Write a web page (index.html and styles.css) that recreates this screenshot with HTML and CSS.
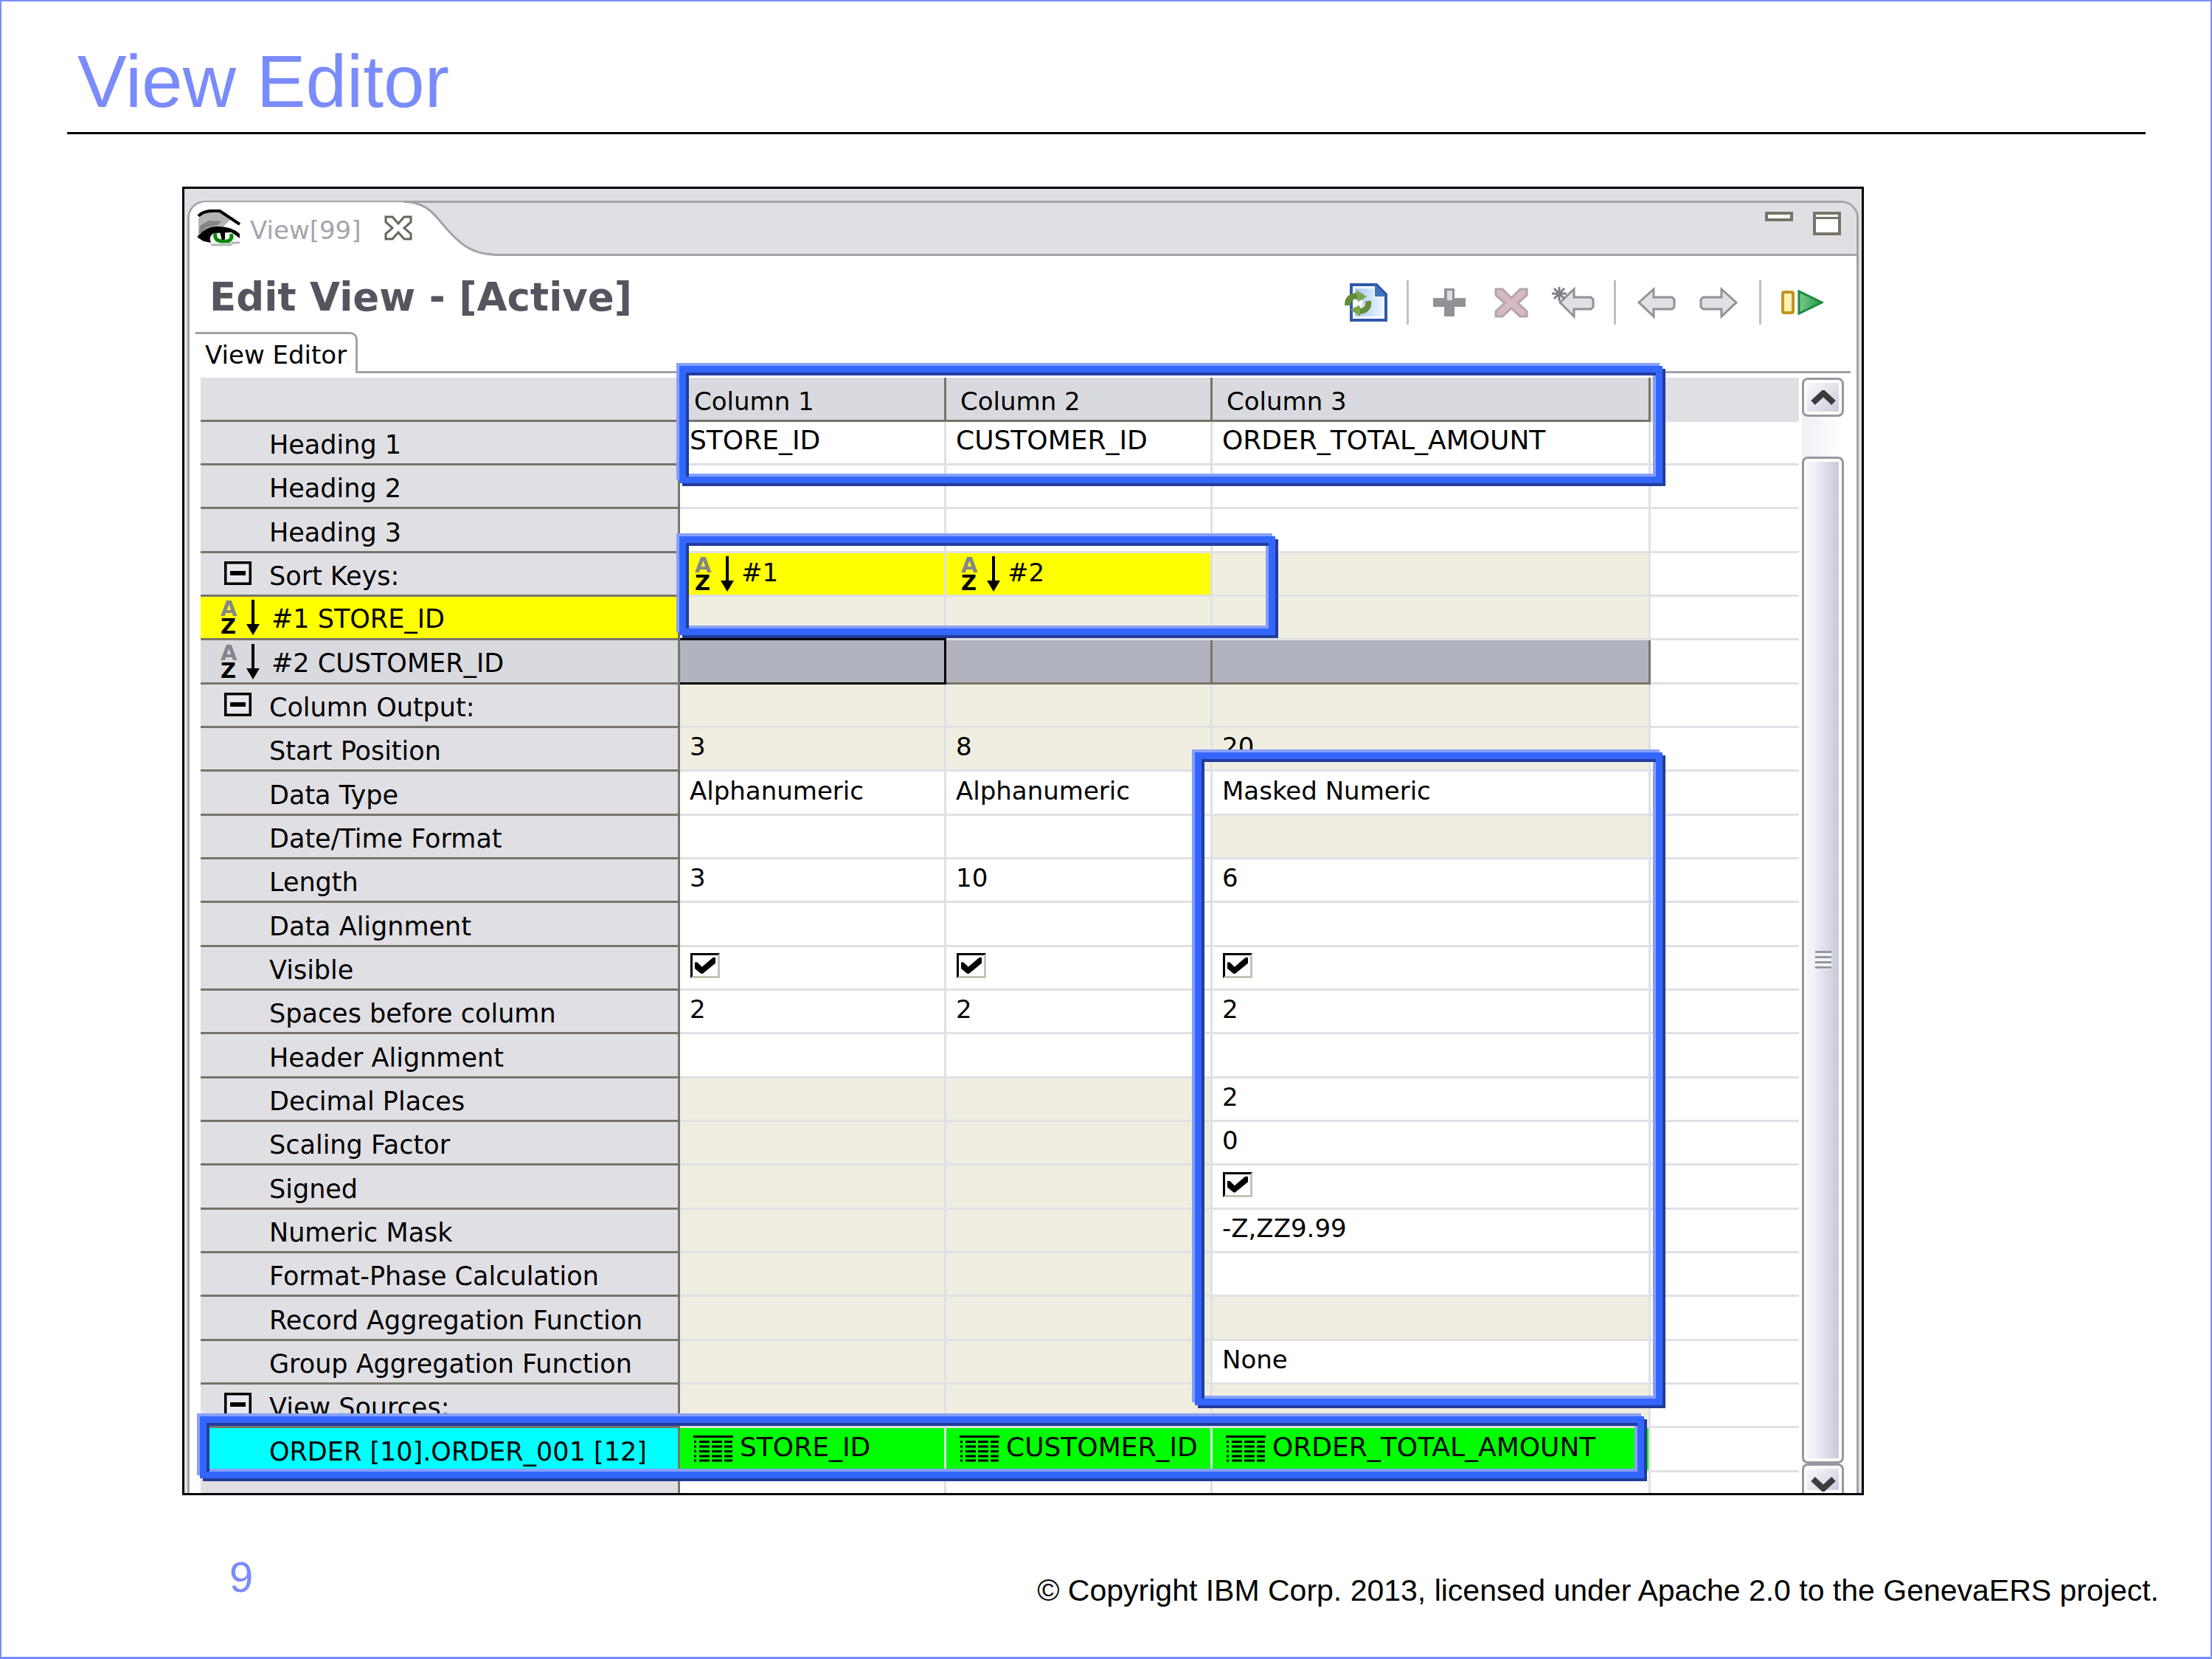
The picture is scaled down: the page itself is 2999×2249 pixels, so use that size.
FILE: index.html
```html
<!DOCTYPE html>
<html lang="en">
<head>
<meta charset="utf-8">
<title>View Editor</title>
<link rel="stylesheet" href="styles.css">
</head>
<body>
<svg class="defs" aria-hidden="true">
  <symbol id="down" viewBox="0 0 18 48">
    <path d="M9 0v36" stroke="#000" stroke-width="4"/>
    <path d="M0 33h18l-9 15z" fill="#000"/>
  </symbol>
  <symbol id="minus" viewBox="0 0 37 32">
    <rect x="1.5" y="1.5" width="34" height="29" fill="#e8e8ee" stroke="#000" stroke-width="4"/>
    <path d="M8 16h21" stroke="#000" stroke-width="6"/>
  </symbol>
  <symbol id="field" viewBox="0 0 54 36">
    <path d="M0 1.5h54" stroke="#000" stroke-width="3"/>
    <path d="M1 8.500h52M1 15h52M1 21.500h52M1 28h52M1 34h52" stroke="#000" stroke-width="3" stroke-dasharray="3 4 14 3 14 3 13"/>
  </symbol>
</svg>
<div class="slide">
  <header class="slide-head"><h1>View Editor</h1></header>
  <main class="shot">
    <div class="folder">
      <div class="strip">
        <svg class="tab-shape" viewBox="0 0 412 75" aria-hidden="true">
          <path d="M0 75V20Q4 5 20 2H290C330 2 335 28 362 52Q382 72 412 73V75z" fill="#fff"/>
          <path d="M290 1.500C330 2 335 28 362 52Q382 72 412 73" fill="none" stroke="#a3a2a9" stroke-width="3"/>
        </svg>
        <div class="tab">
          <svg class="eye" viewBox="0 0 58 50" aria-hidden="true">
            <path d="M1 12Q10 1 30 3L44 14 34 24Q16 22 1 34z" fill="#b5b5b5"/>
            <path d="M3 22l12-7 18 1-6 5-14 3-11 9z" fill="#858585"/>
            <path d="M1 9Q8 0 30 2L57 20" fill="none" stroke="#000" stroke-width="4"/>
            <path d="M0 36Q12 22 28 23 46 23 57 33V39L46 31 22 32Q14 36 18 45L8 43 0 38z" fill="#000"/>
            <path d="M20 35Q32 30 48 33L55 39 44 44H24z" fill="#fff"/>
            <path d="M24 32Q22 42 32 43H42Q48 39 45 33" fill="none" stroke="#078a0e" stroke-width="5"/>
            <path d="M30 30h7v10l-4 2z" fill="#000"/>
            <path d="M18 48h26l4-3h9" fill="none" stroke="#b5b5b5" stroke-width="3"/>
          </svg>
          <span class="tab-name">View[99]</span>
          <button class="plain close" aria-label="Close">
            <svg viewBox="0 0 38 34"><path d="M2 2h9l8 9 8-9h9v7l-9 8 9 8v7h-9l-8-9-8 9H2v-7l9-8-9-8z" fill="#fff" stroke="#66645a" stroke-width="3"/></svg>
          </button>
        </div>
        <div class="window-buttons">
          <button class="plain min" aria-label="Minimize"></button>
          <button class="plain max" aria-label="Maximize"></button>
        </div>
      </div>
      <div class="form-head">
        <h2>Edit View - [Active]</h2>
        <div class="toolbar">
          <button class="plain" aria-label="Refresh"><svg viewBox="0 0 58 52">
            <defs><linearGradient id="pg"><stop offset="0" stop-color="#a9cbf4"/><stop offset="1" stop-color="#eaf5ff"/></linearGradient></defs>
            <path d="M9 2h34l13 13v35H9z" fill="#fff" stroke="#3157ab" stroke-width="4"/>
            <path d="M14 7h26v12h12v26H14z" fill="url(#pg)"/><path d="M41 1v17h16z" fill="#4272ba"/>
            <path d="M4 30Q4 17 18 17M32 24Q34 37 20 38" fill="none" stroke="#638d36" stroke-width="8"/>
            <path d="M16 9l14 9-12 8zM21 45L8 36l13-8z" fill="#7ba64a"/><path d="M15 32v-7l7 5v-7" fill="none" stroke="#fff" stroke-width="4"/>
          </svg></button>
          <span class="sep"></span>
          <button class="plain" aria-label="Add" disabled><svg viewBox="0 0 58 52"><path d="M22 7h14v13h15v12H36v13H22V32H7V20h15z" fill="#929197"/><path d="M26 10h7v13h-7z" fill="#dedde2"/></svg></button>
          <button class="plain" aria-label="Delete" disabled><svg viewBox="0 0 58 52"><path d="M8 8h9l12 12L41 8h9v8L38 27l12 11v7h-9L29 34 17 45H8v-7l12-11L8 16z" fill="#d5babf" stroke="#b3a5aa" stroke-width="3"/></svg></button>
          <button class="plain" aria-label="Insert before" disabled><svg viewBox="0 0 58 52"><path d="M11 26L30 8v11h23l3 3v10l-3 3H30v10z" fill="#e1e0e5" stroke="#929197" stroke-width="3"/><path d="M0 14h20M10 5v19M3 7l14 14M17 7L3 21" stroke="#807f85" stroke-width="3"/></svg></button>
          <span class="sep"></span>
          <button class="plain" aria-label="Move left" disabled><svg viewBox="0 0 58 52"><path d="M5 26L25 8v11h25l3 3v10l-3 3H25v10z" fill="#e1e0e5" stroke="#929197" stroke-width="3"/></svg></button>
          <button class="plain" aria-label="Move right" disabled><svg viewBox="0 0 58 52"><path d="M53 26L33 8v11H8l-3 3v10l3 3h25v10z" fill="#e1e0e5" stroke="#929197" stroke-width="3"/></svg></button>
          <span class="sep"></span>
          <button class="plain" aria-label="Run"><svg viewBox="0 0 58 52">
            <defs><linearGradient id="run"><stop offset="0" stop-color="#7cc98b"/><stop offset="1" stop-color="#1f9a48"/></linearGradient></defs>
            <rect x="3" y="12" width="14" height="28" rx="2" fill="#fdf2b4" stroke="#c49320" stroke-width="4"/><path d="M25 11v30l31-15z" fill="url(#run)" stroke="#1d8a42" stroke-width="3"/>
          </svg></button>
        </div>
      </div>
      <div class="inner-tabs"><button class="plain inner-tab">View Editor</button><div class="inner-line"></div></div>
      <div class="editor">
        <div class="grid-wrap">
          <table>
            <colgroup><col class="c-label"><col class="c-std"><col class="c-std"><col class="c-wide"><col></colgroup>
            <thead>
              <tr><th class="row-label"></th><th class="col">Column 1</th><th class="col">Column 2</th><th class="col">Column 3</th><td class="rest"></td></tr>
            </thead>
            <tbody>
              <tr><th>Heading 1</th><td class="id">STORE_ID</td><td class="id">CUSTOMER_ID</td><td class="id">ORDER_TOTAL_AMOUNT</td><td></td></tr>
              <tr><th>Heading 2</th><td></td><td></td><td></td><td></td></tr>
              <tr><th>Heading 3</th><td></td><td></td><td></td><td></td></tr>
              <tr><th class="group"><button class="plain" aria-label="Collapse"><svg class="i-minus"><use href="#minus"/></svg></button>Sort Keys:</th><td class="key"><span class="i-sort"><span class="az"><b class="a">A</b><b>Z</b></span><svg><use href="#down"/></svg></span>#1</td><td class="key"><span class="i-sort"><span class="az"><b class="a">A</b><b>Z</b></span><svg><use href="#down"/></svg></span>#2</td><td class="off"></td><td></td></tr>
              <tr><th class="sorted key"><span class="i-sort"><span class="az"><b class="a">A</b><b>Z</b></span><svg><use href="#down"/></svg></span>#1 STORE_ID</th><td class="off"></td><td class="off"></td><td class="off"></td><td></td></tr>
              <tr><th class="sorted current"><span class="i-sort"><span class="az"><b class="a">A</b><b>Z</b></span><svg><use href="#down"/></svg></span>#2 CUSTOMER_ID</th><td class="sel focus"></td><td class="sel"></td><td class="sel"></td><td></td></tr>
              <tr><th class="group"><button class="plain" aria-label="Collapse"><svg class="i-minus"><use href="#minus"/></svg></button>Column Output:</th><td class="off"></td><td class="off"></td><td class="off"></td><td></td></tr>
              <tr><th>Start Position</th><td class="off">3</td><td class="off">8</td><td class="off">20</td><td></td></tr>
              <tr><th>Data Type</th><td>Alphanumeric</td><td>Alphanumeric</td><td>Masked Numeric</td><td></td></tr>
              <tr><th>Date/Time Format</th><td></td><td></td><td class="off"></td><td></td></tr>
              <tr><th>Length</th><td>3</td><td>10</td><td>6</td><td></td></tr>
              <tr><th>Data Alignment</th><td></td><td></td><td></td><td></td></tr>
              <tr><th>Visible</th><td><input type="checkbox" aria-label="Column 1 visible" checked></td><td><input type="checkbox" aria-label="Column 2 visible" checked></td><td><input type="checkbox" aria-label="Column 3 visible" checked></td><td></td></tr>
              <tr><th>Spaces before column</th><td>2</td><td>2</td><td>2</td><td></td></tr>
              <tr><th>Header Alignment</th><td></td><td></td><td></td><td></td></tr>
              <tr><th>Decimal Places</th><td class="off"></td><td class="off"></td><td>2</td><td></td></tr>
              <tr><th>Scaling Factor</th><td class="off"></td><td class="off"></td><td>0</td><td></td></tr>
              <tr><th>Signed</th><td class="off"></td><td class="off"></td><td><input type="checkbox" aria-label="Column 3 signed" checked></td><td></td></tr>
              <tr><th>Numeric Mask</th><td class="off"></td><td class="off"></td><td>-Z,ZZ9.99</td><td></td></tr>
              <tr><th>Format-Phase Calculation</th><td class="off"></td><td class="off"></td><td></td><td></td></tr>
              <tr><th>Record Aggregation Function</th><td class="off"></td><td class="off"></td><td class="off"></td><td></td></tr>
              <tr><th>Group Aggregation Function</th><td class="off"></td><td class="off"></td><td>None</td><td></td></tr>
              <tr><th class="group"><button class="plain" aria-label="Collapse"><svg class="i-minus"><use href="#minus"/></svg></button>View Sources:</th><td class="off"></td><td class="off"></td><td class="off"></td><td></td></tr>
              <tr><th class="source">ORDER [10].ORDER_001 [12]</th><td class="field id"><svg class="i-field"><use href="#field"/></svg>STORE_ID</td><td class="field id"><svg class="i-field"><use href="#field"/></svg>CUSTOMER_ID</td><td class="field id"><svg class="i-field"><use href="#field"/></svg>ORDER_TOTAL_AMOUNT</td><td></td></tr>
              <tr class="cut"><th></th><td></td><td></td><td></td><td></td></tr>
            </tbody>
          </table>
          <div class="mark mark-headings"></div>
          <div class="mark mark-keys"></div>
          <div class="mark mark-numeric"></div>
          <div class="mark mark-source"></div>
        </div>
        <div class="scrollbar">
          <button class="plain arrow" aria-label="Scroll up"><svg viewBox="0 0 34 20"><path d="M3 17L17 4l14 13" fill="none" stroke="#3c3c3c" stroke-width="8"/></svg></button>
          <div class="thumb"><span class="grip"></span></div>
          <button class="plain arrow down" aria-label="Scroll down"><svg viewBox="0 0 34 20"><path d="M3 3l14 13L31 3" fill="none" stroke="#3c3c3c" stroke-width="8"/></svg></button>
        </div>
      </div>
    </div>
  </main>
  <footer class="slide-foot"><span class="page-no">9</span><span class="copyright">© Copyright IBM Corp. 2013, licensed under Apache 2.0 to the GenevaERS project.</span></footer>
</div>
</body>
</html>
```
FILE: styles.css
```css
* { box-sizing: border-box; }

body {
  margin: 0;
  background: #fff;
  color: #000;
  font: 34px/40px "DejaVu Sans", Verdana, sans-serif;
}

h1, h2 { margin: 0; font-weight: normal; }
svg { display: block; }
.defs { position: absolute; width: 0; height: 0; }

.plain {
  margin: 0;
  padding: 0;
  border: 0;
  background: none;
  color: inherit;
  font: inherit;
}

/* Slide */
.slide {
  min-height: 100vh;
  border: 2px solid #7a8cfb;
  border-bottom-width: 3px;
  display: flex;
  flex-direction: column;
}
.slide-head {
  margin: 0 88px 0 89px;
  padding: 50px 0 11px 14px;
  border-bottom: 3px solid #000;
}
.slide-head h1 {
  color: #7a8cfb;
  font: 100px/116px "Liberation Sans", Arial, sans-serif;
}
.slide-foot {
  display: flex;
  justify-content: space-between;
  align-items: flex-start;
  padding: 78px 70px 0 309px;
  font-family: "Liberation Sans", Arial, sans-serif;
}
.page-no { color: #7a8cfb; font-size: 58px; line-height: 66px; }
.copyright { padding-top: 26px; font-size: 41px; line-height: 50px; white-space: nowrap; }

/* Framed window */
.shot {
  margin: 71px 470px 0 245px;
  border: 3px solid #000;
  background: #e0dfe4;
  padding: 16px 4px 0;
}
.folder {
  border: 3px solid #a3a2a9;
  border-bottom: 0;
  border-radius: 24px 24px 0 0;
  background: #fff;
}
.strip {
  position: relative;
  display: flex;
  justify-content: space-between;
  align-items: flex-start;
  height: 72px;
  background: #e0dfe4;
  border-bottom: 3px solid #a3a2a9;
  border-radius: 20px 20px 0 0;
}
.tab-shape { position: absolute; left: 0; top: -3px; width: 412px; height: 75px; }
.tab {
  position: relative;
  display: flex;
  align-items: center;
  padding: 9px 0 0 11px;
  color: #a6a4ad;
}
.tab-name { padding-top: 6px; }
.eye { width: 58px; height: 50px; margin-right: 13px; }
.close { margin-left: 32px; }
.close svg { width: 38px; height: 34px; }
.window-buttons { display: flex; gap: 27px; padding: 12px 21px 0 0; }
.min, .max { width: 38px; border: 4px solid #77756a; background: #fff; }
.min { height: 13px; }
.max { height: 32px; background: linear-gradient(#fff 3px, #77756a 3px 6px, #fff 6px); }

.form-head {
  display: flex;
  justify-content: space-between;
  height: 103px;
  padding: 26px 45px 0 27px;
}
h2 { color: #56555f; font-size: 53px; font-weight: bold; line-height: 60px; white-space: nowrap; }
.toolbar { display: flex; align-items: center; gap: 26px; height: 73px; }
.toolbar svg { width: 58px; height: 52px; }
.sep { width: 3px; height: 60px; background: #c0bfc7; }

.inner-tabs { display: flex; margin: 0 8px; }
.inner-tab {
  width: 220px;
  height: 56px;
  padding: 2px 0 0 13px;
  text-align: left;
  border: solid #a3a2a9;
  border-width: 3px 3px 0 0;
  border-radius: 0 10px 0 0;
}
.inner-line { flex: 1; border-bottom: 3px solid #a3a2a9; }

/* Property grid */
.editor { display: flex; gap: 4px; padding: 6px 17px 0 15px; }
.grid-wrap { position: relative; flex: 1; }

table { width: 100%; table-layout: fixed; border-collapse: separate; border-spacing: 0; }
.c-label { width: 650px; }
.c-std { width: 361px; }
.c-wide { width: 594px; }

tr { height: 59px; }
thead tr, tbody tr:nth-child(3n) { height: 60px; }
tbody tr.cut { height: 28px; }

th, td {
  padding: 0 0 6px 13px;
  border: solid #e0e0e5;
  border-width: 0 3px 3px 0;
  text-align: left;
  vertical-align: middle;
  font-weight: normal;
  white-space: nowrap;
}
td:last-child { border-right: 0; }
th {
  padding: 6px 0 0 93px;
  background: #e0dfe4;
  border-color: #77756a;
  font-size: 35px;
}
.col { padding: 6px 0 0 19px; background: #d9dadf; font-size: 34px; }
td.rest { background: #e0dfe4; border-color: #e0dfe4; }
.cut th, .cut td { border-bottom: 0; padding: 0; }

td.id { font-size: 36px; }
.off { background: #f0eee1; }
.key { background: #ff0; }
.current { background: #d9dadf; }
.source { background: #0ff; }
.field { background: #0f0; }
.sel { position: relative; background: #b1b3be; border-color: #77756a; }
.focus::after {
  content: "";
  position: absolute;
  inset: -3px -3px -3px 0;
  border: solid #000;
  border-width: 3px 3px 3px 0;
}

.group { padding-left: 32px; }
.group .plain, td svg { display: inline-block; vertical-align: middle; }
.group .plain { width: 61px; margin-top: -12px; }
.i-minus { width: 37px; height: 32px; }
.sorted { padding-left: 27px; }
td.key { padding: 0 0 0 20px; }
td.field { padding-left: 18px; }
.i-field { width: 54px; height: 36px; margin-right: 9px; }

/* Sort icon: stacked letters beside an arrow */
.i-sort { display: inline-flex; gap: 8px; height: 48px; margin-right: 10px; vertical-align: middle; }
.sorted .i-sort { margin: -8px 16px 0 0; }
.i-sort svg { width: 18px; height: 48px; }
.az { display: flex; flex-direction: column; width: 27px; font-size: 29px; line-height: 24px; }
.a { color: #85858c; }

input[type="checkbox"] {
  appearance: none;
  display: block;
  width: 40px;
  height: 34px;
  margin: 0 0 0 1px;
  border: 3px solid #000;
  border-right-color: #c4c3b4;
  border-bottom-color: #c4c3b4;
  background: #fff;
}
input[type="checkbox"]::before {
  content: "";
  display: block;
  width: 28px;
  height: 22px;
  margin: 3px;
  background: #000;
  clip-path: polygon(0 30%, 12% 30%, 35% 58%, 88% 0, 100% 0, 100% 35%, 38% 100%, 30% 100%, 0 68%);
}

/* Callout frames laid over the grid */
.mark {
  position: absolute;
  border: 9px solid #36f;
  filter: drop-shadow(4px 4px 0 #223c9c) drop-shadow(-4px -4px 0 #86a0fb);
  pointer-events: none;
}
.mark-headings { left: 649px; top: -16px; width: 1333px; height: 159px; }
.mark-keys { left: 649px; top: 215px; width: 808px; height: 134px; }
.mark-numeric { left: 1348px; top: 508px; width: 634px; height: 885px; }
.mark-source { left: -1px; top: 1408px; width: 1958px; height: 84px; }

/* Scroll bar */
.scrollbar { display: flex; flex-direction: column; width: 57px; background: linear-gradient(90deg, #f0eff5, #fff); }
.arrow {
  display: flex;
  justify-content: center;
  align-items: center;
  height: 53px;
  border: 3px solid #98979f;
  border-radius: 8px;
  background: linear-gradient(135deg, #fff, #c6c7d9);
  box-shadow: inset 0 0 0 4px #fff;
}
.arrow svg { width: 34px; height: 20px; }
.arrow.down { height: 40px; padding-top: 12px; border-bottom: 0; border-radius: 8px 8px 0 0; }
.thumb {
  flex: 1;
  display: flex;
  justify-content: center;
  align-items: center;
  margin-top: 54px;
  border: 3px solid #98979f;
  border-radius: 8px;
  background: linear-gradient(90deg, #f4f4f8 20%, #c3c4d6);
  box-shadow: inset 0 0 0 4px #fff;
}
.grip { width: 22px; height: 25px; background: repeating-linear-gradient(#98979f 0 3px, #f4f4f8 3px 7px); }
```
